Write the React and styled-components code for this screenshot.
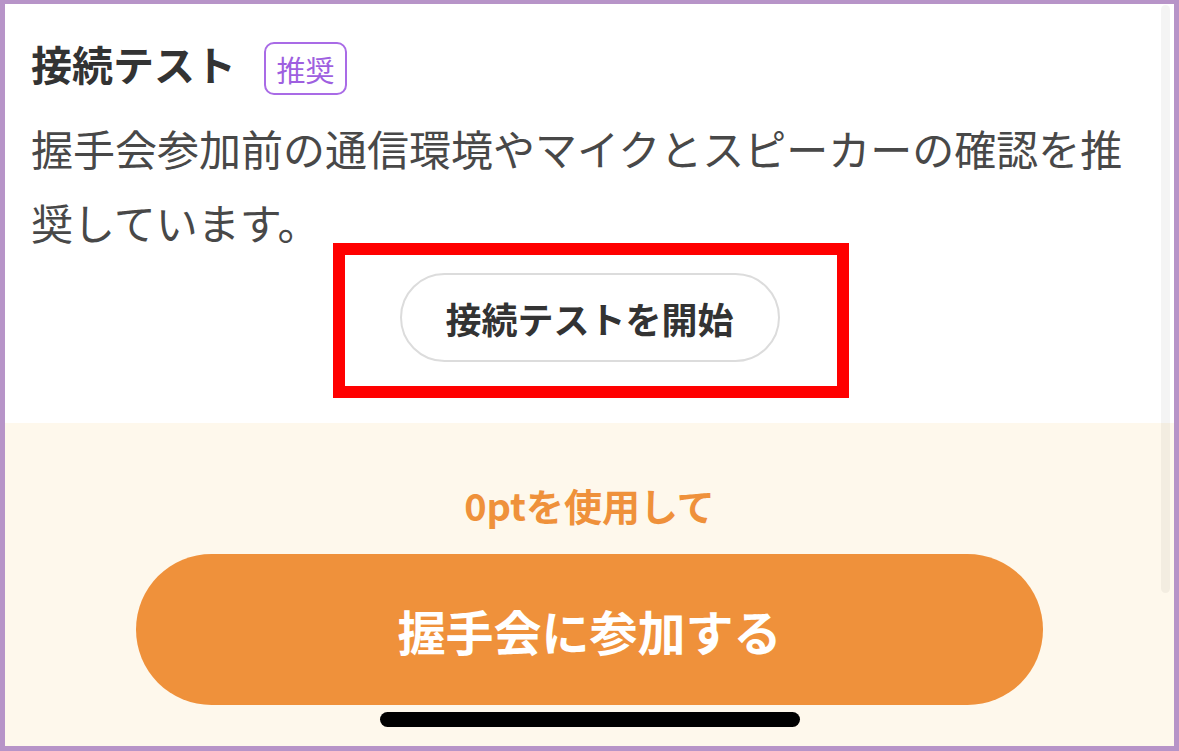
import React from "react";
import styled, { createGlobalStyle } from "styled-components";

const GlobalStyle = createGlobalStyle`
  html, body {
    margin: 0;
    padding: 0;
    background: #b794c8;
  }
  body {
    font-family: "Noto Sans CJK JP", "Noto Sans", sans-serif;
  }
  * {
    box-sizing: border-box;
  }
`;

const App = () => {
  return (
    <>
      <GlobalStyle />
      <Screen>
        <TestSection>
          <TitleRow>
            <Title>接続テスト</Title>
            <Badge>推奨</Badge>
          </TitleRow>
          <Description>
            握手会参加前の通信環境やマイクとスピーカーの確認を推奨しています。
          </Description>
          <ButtonRow>
            <TestButton>
              接続テストを開始
              <Highlight />
            </TestButton>
          </ButtonRow>
        </TestSection>
        <JoinSection>
          <PointNote>0ptを使用して</PointNote>
          <JoinButton>握手会に参加する</JoinButton>
          <HomeIndicator />
        </JoinSection>
        <ScrollTrack />
      </Screen>
    </>
  );
};

const Screen = styled.div`
  position: relative;
  display: flex;
  flex-direction: column;
  width: 1169px;
  height: 742px;
  margin: 4px 5px 5px 5px;
  background: #ffffff;
  overflow: hidden;
`;

const TestSection = styled.section`
  display: flex;
  flex-direction: column;
  height: 419px;
  padding: 38px 26px 0 26px;
  background: #ffffff;
`;

const TitleRow = styled.div`
  display: flex;
  align-items: center;
  gap: 28px;
  height: 53px;
`;

const Title = styled.h2`
  margin: 0;
  font-size: 41px;
  line-height: 53px;
  font-weight: 700;
  color: #333333;
  transform: translateY(-5px);
`;

const Badge = styled.span`
  display: inline-flex;
  align-items: center;
  justify-content: center;
  width: 83px;
  height: 53px;
  border: 2.5px solid #a96be6;
  border-radius: 10px;
  font-size: 29px;
  font-weight: 400;
  color: #9e5fe0;
`;

const Description = styled.p`
  margin: 16px 0 0 0;
  font-size: 42px;
  line-height: 74px;
  font-weight: 400;
  color: #484848;
`;

const ButtonRow = styled.div`
  display: flex;
  justify-content: center;
  margin-top: 14px;
`;

const TestButton = styled.button`
  position: relative;
  width: 380px;
  height: 89px;
  border: 2px solid #dcdcdc;
  border-radius: 45px;
  background: #ffffff;
  font-family: inherit;
  font-size: 36px;
  font-weight: 700;
  color: #333333;
  cursor: pointer;
`;

const Highlight = styled.span`
  position: absolute;
  left: -69px;
  right: -71px;
  top: -32px;
  bottom: -38px;
  border: 12px solid #ff0000;
  pointer-events: none;
`;

const JoinSection = styled.section`
  flex: 1;
  display: flex;
  flex-direction: column;
  align-items: center;
  padding-top: 59px;
  background: #fef8ec;
`;

const PointNote = styled.p`
  margin: 0;
  font-size: 38px;
  line-height: 46px;
  font-weight: 700;
  color: #ef913b;
`;

const JoinButton = styled.button`
  width: 907px;
  height: 151px;
  margin-top: 26px;
  border: none;
  border-radius: 76px;
  background: #ef913b;
  font-family: inherit;
  font-size: 48px;
  font-weight: 700;
  color: #ffffff;
  cursor: pointer;
`;

const HomeIndicator = styled.div`
  width: 420px;
  height: 15px;
  margin-top: 7px;
  border-radius: 8px;
  background: #000000;
`;

const ScrollTrack = styled.div`
  position: absolute;
  top: 1px;
  right: 4px;
  width: 9px;
  height: 588px;
  border-radius: 5px;
  background: rgba(0, 0, 0, 0.045);
`;

export default App;
